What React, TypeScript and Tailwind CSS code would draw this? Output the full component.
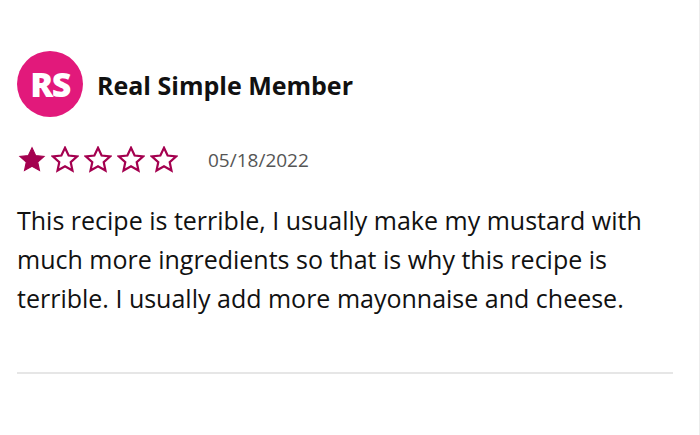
import React from 'react';

const Star = ({ filled }: { filled: boolean }) => (
  <svg width="28" height="27" viewBox="0 0 24 23" className="shrink-0">
    <path
      d="M12 1.5l3.1 6.6 7.2.8-5.4 4.9 1.5 7.1L12 17.3l-6.4 3.6 1.5-7.1L1.7 8.9l7.2-.8z"
      fill={filled ? '#a4004f' : 'none'}
      stroke="#a4004f"
      strokeWidth={filled ? 1 : 1.9}
      strokeLinejoin="miter"
    />
  </svg>
);

const lines = [
  'This recipe is terrible, I usually make my mustard with',
  'much more ingredients so that is why this recipe is',
  'terrible. I usually add more mayonnaise and cheese.',
];

const App: React.FC = () => {
  const rating = 1;

  return (
    <div className="w-[700px] h-[435px] bg-white overflow-hidden border-r border-[#ececec] font-['Open_Sans',sans-serif] text-[#111]">
      <div className="px-[17px] pt-[51px]">
        {/* Author */}
        <div className="flex items-center gap-[14px]">
          <div className="w-[66px] h-[66px] rounded-full bg-[#e2197b] flex items-center justify-center">
            <span className="text-white font-extrabold text-[34px] tracking-[-1.5px] leading-none">RS</span>
          </div>
          <span className="font-bold text-[25px] mt-[3px]">Real Simple Member</span>
        </div>

        {/* Rating + date */}
        <div className="flex items-center mt-[27px] h-[30px]">
          <div className="flex items-center gap-[5px] ml-[1px]">
            {[0, 1, 2, 3, 4].map((i) => (
              <Star key={i} filled={i < rating} />
            ))}
          </div>
          <span className="ml-[30px] text-[19px] text-[#555] mt-[3px]">05/18/2022</span>
        </div>

        {/* Body */}
        <p className="mt-[27px] text-[25px] leading-[39px]">
          {lines.map((l) => (
            <span key={l} className="block whitespace-nowrap">
              {l}
            </span>
          ))}
        </p>

        <div className="mt-[54px] h-[2px] w-[656px] bg-[#e6e6e6]" />
      </div>
    </div>
  );
};

export default App;
